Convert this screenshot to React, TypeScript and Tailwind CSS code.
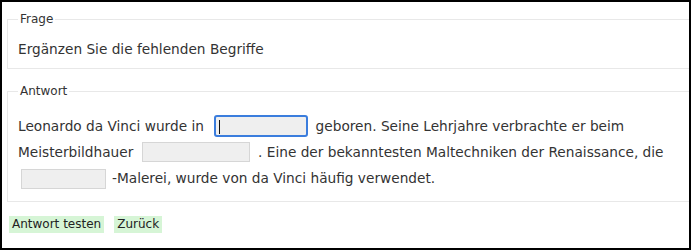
import React from "react";

const font = { fontFamily: '"DejaVu Sans", Verdana, sans-serif' };

function Blank({ w, focused }: { w: number; focused?: boolean }) {
  if (focused) {
    return (
      <span className="relative inline-block ml-[6px] mr-[3px] h-[22px] w-[94px] align-middle rounded-[3px] border-2 border-[#3b7ddd] bg-[#efefef]">
        <span className="absolute left-[3px] top-[3px] h-[14px] w-px bg-[#111]" />
      </span>
    );
  }
  return (
    <input
      readOnly
      className="mx-[4px] h-[20px] align-middle border border-[#d6d6d6] bg-[#efefef] outline-none"
      style={{ width: w }}
    />
  );
}

export default function App() {
  return (
    <div
      className="w-[691px] h-[250px] border-2 border-black bg-white text-[#333] overflow-hidden pt-[9px] pl-[5px]"
      style={font}
    >
      <fieldset className="border border-r-0 border-[#e8e8e8] pl-[10px] pt-[12px] pb-[9px]">
        <legend className="px-[2px] text-[12px] leading-[16px]">Frage</legend>
        <div className="text-[13.7px] leading-[20px]">Ergänzen Sie die fehlenden Begriffe</div>
      </fieldset>

      <fieldset className="mt-[14px] border border-r-0 border-[#e8e8e8] pl-[10px] pt-[14px] pb-[10px]">
        <legend className="px-[2px] text-[12px] leading-[16px]">Antwort</legend>
        <div className="text-[13.7px]">
          <div className="h-[26px] flex items-center whitespace-pre">
            <span>Leonardo da Vinci wurde in </span>
            <Blank w={94} focused />
            <span> geboren. Seine Lehrjahre verbrachte er beim</span>
          </div>
          <div className="h-[26px] flex items-center whitespace-pre">
            <span>Meisterbildhauer </span>
            <Blank w={108} />
            <span> . Eine der bekanntesten Maltechniken der Renaissance, die</span>
          </div>
          <div className="h-[26px] flex items-center whitespace-pre">
            <span className="-ml-px">
              <Blank w={85} />
            </span>
            <span className="ml-[2px]">-Malerei, wurde von da Vinci häufig verwendet.</span>
          </div>
        </div>
      </fieldset>

      <div className="mt-[14px] flex gap-[10px] pl-[2px]">
        <button className="h-[17px] px-[3px] bg-[#d6f5d6] text-[#222] text-[12px] leading-[17px]">
          Antwort testen
        </button>
        <button className="h-[17px] px-[3px] bg-[#d6f5d6] text-[#222] text-[12px] leading-[17px]">
          Zurück
        </button>
      </div>
    </div>
  );
}
